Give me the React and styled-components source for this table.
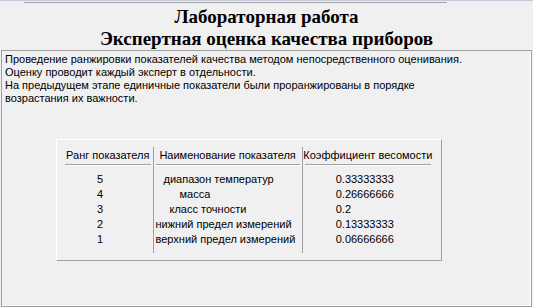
import React from "react";
import styled, { createGlobalStyle } from "styled-components";

const GlobalStyle = createGlobalStyle`
  html, body {
    margin: 0;
    padding: 0;
    background: #f0f0f0;
  }
`;

const Window = styled.div`
  width: 533px;
  height: 307px;
  display: flex;
  flex-direction: column;
  background: #f0f0f0;
  overflow: hidden;
`;

const TopStrip = styled.div`
  height: 3px;
  border-top: 1px solid #c6c9da;
  box-sizing: border-box;
  display: flex;
  align-items: flex-end;
`;

const TopRule = styled.div`
  margin-left: 24px;
  width: 423px;
  height: 0;
  border-top: 1px solid #a0a0a0;
`;

const Title = styled.h1`
  margin: 0;
  height: 47px;
  padding-top: 3px;
  box-sizing: border-box;
  font-family: "Liberation Serif", "Times New Roman", serif;
  font-weight: bold;
  font-size: 19px;
  line-height: 22px;
  text-align: center;
  color: #000;
`;

const Panel = styled.div`
  flex: 1;
  margin: 0 1px;
  border: 1px solid #a0a0a0;
  border-top-color: #a0a0a0;
  box-shadow: inset -1px -1px 0 #fff;
  padding: 2px 3px 0;
  font-family: "Liberation Sans", Arial, sans-serif;
  font-size: 11px;
  color: #000;
`;

const Intro = styled.p`
  margin: 0;
  line-height: 13px;
`;

const Table = styled.div`
  margin: 34px 0 0 51px;
  width: 386px;
  box-sizing: border-box;
  display: flex;
  padding: 7px 8px 7px 6px;
  border: 1px solid;
  border-color: #fff #a0a0a0 #a0a0a0 #fff;
`;

const Column = styled.div`
  width: ${(p) => p.$width}px;
  display: flex;
  flex-direction: column;
  border-left: ${(p) => (p.$divider ? "1px solid #a0a0a0" : "none")};
  padding-bottom: 6px;
`;

const Header = styled.div`
  height: 17px;
  line-height: 16px;
  text-align: center;
  white-space: nowrap;
`;

const Underline = styled.div`
  margin: 0 2px 6px;
  border-top: 1px solid #a0a0a0;
  border-bottom: 1px solid #fff;
`;

const Cell = styled.div`
  height: 15px;
  line-height: 15px;
  padding-left: ${(p) => p.$indent}px;
  white-space: nowrap;
`;

const rows = [
  { rank: "5", name: "диапазон температур", indent: 10, weight: "0.33333333" },
  { rank: "4", name: "масса", indent: 26, weight: "0.26666666" },
  { rank: "3", name: "класс точности", indent: 16, weight: "0.2" },
  { rank: "2", name: "нижний предел измерений", indent: 2, weight: "0.13333333" },
  { rank: "1", name: "верхний предел измерений", indent: 2, weight: "0.06666666" },
];

const App = () => {
  return (
    <>
      <GlobalStyle />
      <Window>
        <TopStrip>
          <TopRule />
        </TopStrip>
        <Title>
          Лабораторная работа
          <br />
          Экспертная оценка качества приборов
        </Title>
        <Panel>
          <Intro>
            Проведение ранжировки показателей качества методом непосредственного оценивания.
            <br />
            Оценку проводит каждый эксперт в отдельности.
            <br />
            На предыдущем этапе единичные показатели были проранжированы в порядке
            <br />
            возрастания их важности.
          </Intro>
          <Table>
            <Column $width={90}>
              <Header>Ранг показателя</Header>
              <Underline />
              {rows.map((r) => (
                <Cell key={r.rank} $indent={34}>
                  {r.rank}
                </Cell>
              ))}
            </Column>
            <Column $width={149} $divider>
              <Header>Наименование показателя</Header>
              <Underline />
              {rows.map((r) => (
                <Cell key={r.rank} $indent={r.indent}>
                  {r.name}
                </Cell>
              ))}
            </Column>
            <Column $width={131} $divider>
              <Header>Коэффициент весомости</Header>
              <Underline />
              {rows.map((r) => (
                <Cell key={r.rank} $indent={33}>
                  {r.weight}
                </Cell>
              ))}
            </Column>
          </Table>
        </Panel>
      </Window>
    </>
  );
};

export default App;
